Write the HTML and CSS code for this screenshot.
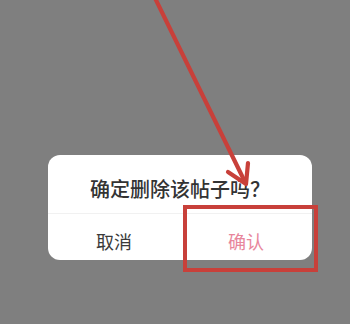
FILE: index.html
```html
<!DOCTYPE html>
<html lang="zh-CN">
<head>
<meta charset="utf-8">
<link rel="stylesheet" href="styles.css">
</head>
<body>
<div class="screen">
  <div class="dialog">
    <div class="title">确定删除该帖子吗？</div>
    <div class="actions">
      <div class="btn cancel">取消</div>
      <div class="btn confirm">确认</div>
    </div>
  </div>
  <svg class="annot" width="350" height="324" viewBox="0 0 350 324">
    <line x1="155" y1="-2" x2="245" y2="182" stroke="#c8403a" stroke-width="4.2" stroke-linecap="round"/>
    <polyline points="228,172 246,184 248,163" fill="none" stroke="#c8403a" stroke-width="4.2" stroke-linecap="round" stroke-linejoin="round"/>
    <rect x="185" y="207" width="131" height="63" fill="none" stroke="#c8403a" stroke-width="4"/>
  </svg>
</div>
</body>
</html>
```
FILE: styles.css
```css
html, body {
  margin: 0;
  padding: 0;
}
body {
  background: #7f7f7f;
  font-family: "Noto Sans CJK SC", "Noto Sans", sans-serif;
}
.screen {
  position: relative;
  width: 350px;
  height: 324px;
  padding-top: 155px;
  padding-left: 48px;
  box-sizing: border-box;
}
.dialog {
  width: 264px;
  height: 105px;
  background: #fff;
  border-radius: 12px;
  display: flex;
  flex-direction: column;
}
.title {
  font-size: 20px;
  line-height: 20px;
  font-weight: 500;
  color: #333;
  text-align: center;
  padding-top: 24px;
  padding-bottom: 14px;
}
.actions {
  display: flex;
  border-top: 1px solid #f1f1f1;
  flex: 1;
}
.btn {
  flex: 1;
  text-align: center;
  font-size: 18px;
  line-height: 18px;
  padding-top: 18px;
}
.cancel {
  color: #3a3a3a;
}
.confirm {
  color: #e8869c;
}
.annot {
  position: absolute;
  left: 0;
  top: 0;
}
```
